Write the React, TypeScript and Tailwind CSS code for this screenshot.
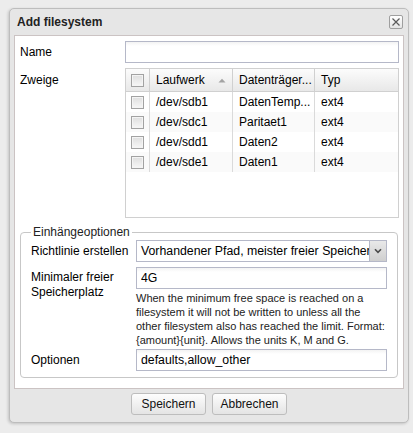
import React from "react";

function Checkbox() {
  return (
    <div className="w-[13px] h-[13px] border border-[#a2a2a2] bg-gradient-to-b from-[#dedede] to-[#f7f7f7] shadow-[inset_0_0_0_1px_#f4f4f4]" />
  );
}

function TextField({ value }: { value: string }) {
  return (
    <input
      readOnly
      value={value}
      className="block w-full min-w-0 h-[22px] border border-[#b5b8c8] bg-white bg-gradient-to-b from-[#f3f3f3] via-white via-[20%] to-white px-[4px] text-[12.3px] text-black outline-none font-['Liberation_Sans',Arial,sans-serif]"
    />
  );
}

export default function App() {
  const rows = [
    ["/dev/sdb1", "DatenTemp...", "ext4"],
    ["/dev/sdc1", "Paritaet1", "ext4"],
    ["/dev/sdd1", "Daten2", "ext4"],
    ["/dev/sde1", "Daten1", "ext4"],
  ];
  return (
    <div className="w-[413px] h-[433px] bg-[#ececec] pt-[8px] pl-[9px] font-['Liberation_Sans',Arial,sans-serif] text-[12px] text-black">
      <div className="w-[400px] h-[415px] flex flex-col bg-[#e6e6e6] border border-[#bdbdbd] rounded-[5px] shadow-[-1px_1px_3px_rgba(0,0,0,0.18)] px-[4px]">
        {/* header */}
        <div className="h-[26px] shrink-0 flex items-center justify-between pl-[3px] pr-[1px]">
          <span className="font-bold text-[#222] leading-[14px]">Add filesystem</span>
          <div className="w-[14px] h-[14px] border border-[#9f9f9f] rounded-[2px] bg-gradient-to-b from-white to-[#e4e4e4] flex items-center justify-center">
            <svg width="10" height="10" viewBox="0 0 10 10">
              <path d="M1.5 1.5 L8.5 8.5 M8.5 1.5 L1.5 8.5" stroke="#5a5a5a" strokeWidth="1.2" fill="none" />
            </svg>
          </div>
        </div>

        {/* body */}
        <div className="h-[354px] shrink-0 bg-white border border-[#cbc3c3] pl-[5px] pr-[4px] pt-[5px] flex flex-col min-w-0">
          <div className="flex items-center">
            <div className="w-[105px] shrink-0 leading-[14px]">Name</div>
            <div className="flex-1 min-w-0">
              <TextField value="" />
            </div>
          </div>

          <div className="flex mt-[5px]">
            <div className="w-[105px] shrink-0 leading-[14px] pt-[5px]">Zweige</div>
            <div className="flex-1 min-w-0 h-[150px] border border-[#d0d0d0] bg-white">
              <div className="grid grid-cols-[24px_83px_82px_1fr] h-[23px] border-b border-[#d0d0d0] bg-gradient-to-b from-[#fcfcfc] to-[#e8e8e8]">
                <div className="border-r border-[#d0d0d0] flex items-center justify-center">
                  <Checkbox />
                </div>
                <div className="border-r border-[#d0d0d0] flex items-center pl-[6px] pr-[6px] justify-between">
                  <span>Laufwerk</span>
                  <svg width="8" height="5" viewBox="0 0 8 5">
                    <path d="M0.5 4.5 L4 0.8 L7.5 4.5 Z" fill="#a3a3a3" />
                  </svg>
                </div>
                <div className="border-r border-[#d0d0d0] flex items-center pl-[6px] whitespace-nowrap overflow-hidden">
                  Datenträger...
                </div>
                <div className="flex items-center pl-[6px]">Typ</div>
              </div>
              {rows.map((r, i) => (
                <div
                  key={i}
                  className={
                    "grid grid-cols-[24px_83px_82px_1fr] h-[20px] " +
                    (i % 2 === 1 ? "bg-[#fafafa]" : "bg-white")
                  }
                >
                  <div className="border-r border-[#dadada] flex items-center justify-center">
                    <Checkbox />
                  </div>
                  <div className="border-r border-[#dadada] flex items-center pl-[6px] whitespace-nowrap overflow-hidden">
                    {r[0]}
                  </div>
                  <div className="border-r border-[#dadada] flex items-center pl-[6px] whitespace-nowrap overflow-hidden">
                    {r[1]}
                  </div>
                  <div className="flex items-center pl-[6px]">{r[2]}</div>
                </div>
              ))}
            </div>
          </div>

          <fieldset className="mt-[7px] mr-[1px] min-w-0 border border-[#c7c7c7] rounded-[4px] pl-[10px] pr-[10px] pb-[6px]">
            <legend className="px-[2px] leading-[14px] text-[#222]">Einhängeoptionen</legend>
            <div className="flex items-center mt-[1px]">
              <div className="w-[105px] shrink-0 leading-[14px]">Richtlinie erstellen</div>
              <div className="flex-1 min-w-0 h-[22px] border border-[#b5b8c8] bg-white flex">
                <div className="flex-1 min-w-0 overflow-hidden whitespace-nowrap pl-[4px] flex items-center text-[12.3px]">
                  Vorhandener Pfad, meister freier Speicherplatz
                </div>
                <div className="w-[17px] shrink-0 border-l border-[#b5b8c8] bg-gradient-to-b from-[#e9e9e9] to-[#cfcfcf] flex items-center justify-center">
                  <svg width="8" height="6" viewBox="0 0 8 6">
                    <path d="M1 1.2 L4 4.3 L7 1.2" stroke="#4a4a4a" strokeWidth="1.6" fill="none" />
                  </svg>
                </div>
              </div>
            </div>

            <div className="flex mt-[5px]">
              <div className="w-[105px] shrink-0 leading-[15px] pt-[3px]">
                Minimaler freier
                <br />
                Speicherplatz
              </div>
              <div className="flex-1 min-w-0">
                <TextField value="4G" />
                <div className="mt-[2px] leading-[14px] text-[11px] text-[#222] whitespace-nowrap">
                  When the minimum free space is reached on a
                  <br />
                  filesystem it will not be written to unless all the
                  <br />
                  other filesystem also has reached the limit. Format:
                  <br />
                  {"{amount}{unit}. Allows the units K, M and G."}
                </div>
              </div>
            </div>

            <div className="flex items-center mt-[2px]">
              <div className="w-[105px] shrink-0 leading-[14px]">Optionen</div>
              <div className="flex-1 min-w-0">
                <TextField value="defaults,allow_other" />
              </div>
            </div>
          </fieldset>
        </div>

        {/* footer */}
        <div className="flex-1 flex justify-center items-start gap-[6px] pt-[4px]">
          <button className="w-[75px] h-[22px] border border-[#bdbdbd] rounded-[3px] bg-gradient-to-b from-[#fdfdfd] to-[#e4e4e4] text-[12px] text-[#111] font-['Liberation_Sans',Arial,sans-serif]">
            Speichern
          </button>
          <button className="w-[75px] h-[22px] border border-[#bdbdbd] rounded-[3px] bg-gradient-to-b from-[#fdfdfd] to-[#e4e4e4] text-[12px] text-[#111] font-['Liberation_Sans',Arial,sans-serif]">
            Abbrechen
          </button>
        </div>
      </div>
    </div>
  );
}
